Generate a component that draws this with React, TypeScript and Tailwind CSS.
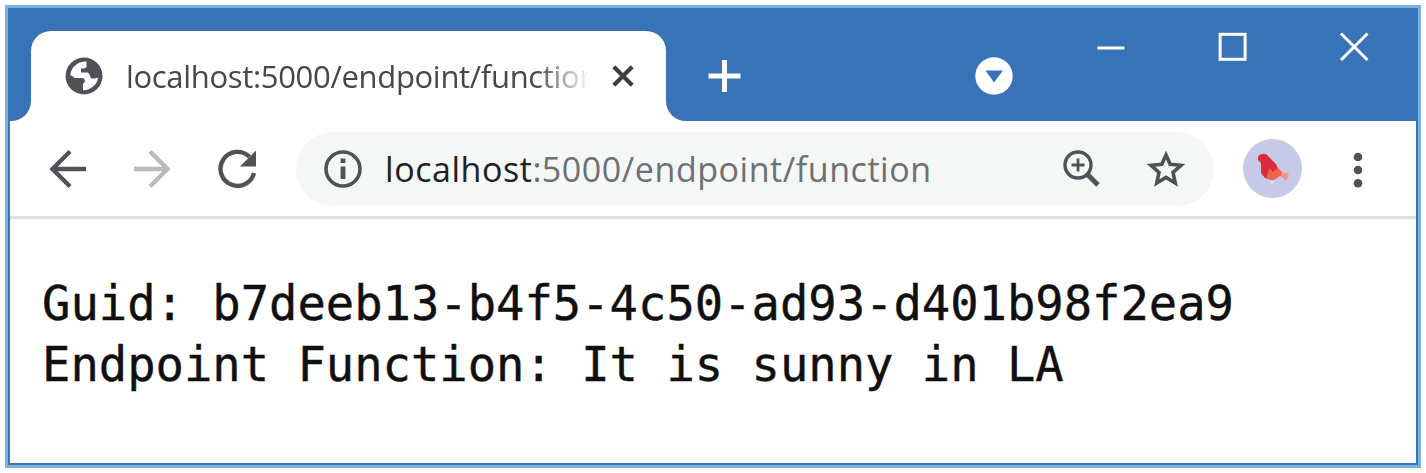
import type { ReactNode } from "react";

function Icon({ className, children }: { className: string; children: ReactNode }) {
  return (
    <svg className={`shrink-0 ${className}`} viewBox="0 0 44 44" width="44" height="44" fill="none">
      {children}
    </svg>
  );
}

function TabStrip() {
  return (
    <div className="h-[113px] shrink-0 flex flex-col bg-white">
      <div className="h-[23px] bg-[#3873b7]" />
      <div className="flex h-[90px]">
        <div className="w-[21px] rounded-br-[20px] bg-[#3873b7]" />
        <div className="w-[635px] bg-[#3873b7]">
          <div className="flex h-full items-center rounded-t-[20px] bg-white pl-[31px]">
            <Icon className="text-[#4f5358]">
              <circle cx="22" cy="22" r="18.5" fill="currentColor" />
              <path d="M24.5 7.5 C16 7 9 13 8.3 21 L13 24 L20 24 C22 24 23 25.5 23 27.5 L21 30 L21 36.2 C28 36.5 35.5 31 36 23.5 L33 24.5 L30 24.5 C28 24.5 28 19 25.5 18.5 L19 18.5 L19 14.5 C21 14.5 24.5 14.5 24.5 12.5 Z" fill="white" />
            </Icon>
            <div className="ml-[20px] w-[465px] overflow-hidden whitespace-nowrap font-['Open_Sans',sans-serif] text-[31px] leading-[44px] tracking-[-0.32px] text-[#45474c] [mask-image:linear-gradient(to_right,black_88%,transparent)]">
              localhost:5000/endpoint/function
            </div>
            <Icon className="ml-[10px] text-[#3c4043]">
              <path d="M12.8 12.8 L31.2 31.2 M31.2 12.8 L12.8 31.2" stroke="currentColor" strokeWidth="4.2" />
            </Icon>
          </div>
        </div>
        <div className="flex flex-1 rounded-bl-[20px] bg-[#3873b7] text-white">
          <Icon className="ml-[36px] mt-[23px]">
            <path d="M22.5 6 V38 M6.5 22 H38.5" stroke="currentColor" strokeWidth="5" />
          </Icon>
          <Icon className="ml-[226px] mt-[23px]">
            <circle cx="22" cy="22" r="18.7" fill="currentColor" />
            <path d="M13.5 16.5 H31 L22 28.5 Z" fill="#3873b7" />
          </Icon>
          <Icon className="ml-[73px] -mt-[6px]">
            <path d="M8.5 23 H35.5" stroke="currentColor" strokeWidth="3" />
          </Icon>
          <Icon className="ml-[78px] -mt-[6px]">
            <rect x="9.1" y="9.3" width="25" height="25" stroke="currentColor" strokeWidth="3" />
          </Icon>
          <Icon className="ml-[77px] -mt-[6px]">
            <path d="M9 8.5 L35.5 35 M35.5 8.5 L9 35" stroke="currentColor" strokeWidth="3" />
          </Icon>
        </div>
      </div>
    </div>
  );
}

function Toolbar() {
  return (
    <div className="flex h-[98px] shrink-0 border-b-[3px] border-[#dedfe0] bg-white pt-[10px] text-[#4f5358]">
      <div className="flex h-[75px] flex-1 items-center">
        <Icon className="ml-[35px]">
          <path d="M41 22 H7 M25 4.5 L7.5 22 L25 39.5" stroke="currentColor" strokeWidth="4.4" />
        </Icon>
        <Icon className="ml-[42px] text-[#b9babc]">
          <path d="M3 22 H37 M19 4.5 L36.5 22 L19 39.5" stroke="currentColor" strokeWidth="4.4" />
        </Icon>
        <Icon className="ml-[40px]">
          <path d="M39 26 A17 17 0 1 1 34.5 9.8" stroke="currentColor" strokeWidth="4.4" />
          <path d="M41 3.5 V19.5 H25 Z" fill="currentColor" />
        </Icon>
        <div className="ml-[37px] flex h-[74px] w-[918px] items-center rounded-full bg-[#f5f6f6] pl-[25px]">
          <Icon className="">
            <circle cx="22" cy="22" r="17" stroke="currentColor" strokeWidth="3.6" />
            <path d="M22 11.5 V16 M22 19.5 V32" stroke="currentColor" strokeWidth="4.8" />
          </Icon>
          <div className="ml-[20px] w-[560px] whitespace-nowrap font-['Open_Sans',sans-serif] text-[34px] leading-[44px] tracking-[0.55px] text-[#6d7074]">
            <span className="text-[#202124]">localhost</span>:5000/endpoint/function
          </div>
          <Icon className="ml-[115px]">
            <circle cx="18" cy="18" r="13" stroke="currentColor" strokeWidth="3.4" />
            <path d="M27 27 L38 38" stroke="currentColor" strokeWidth="5" />
            <path d="M18 11.5 V24.5 M11.5 18 H24.5" stroke="currentColor" strokeWidth="2.8" />
          </Icon>
          <Icon className="ml-[40px]">
            <path d="M22 8 L26.2 17.3 L37 18.3 L29 25.4 L31.3 36 L22 30.4 L12.7 36 L15 25.4 L7 18.3 L17.8 17.3 Z" stroke="currentColor" strokeWidth="3.6" />
          </Icon>
        </div>
        <div className="ml-[29px] flex size-[59px] items-center justify-center rounded-full bg-[#c7cae6]">
          <svg width="36" height="32" viewBox="0 0 36 32">
            <path d="M3 4 C5 0 11 0 13 3 L21 11 L24 18 L22 25 L17 27 L10 25 L6 20 L6 10 L3 7 Z" fill="#dc2b3d" />
            <path d="M13 19 L15 15 L18 19 L23 15 L28 20 L33 21 L32 26 L25 23 L19 27 L11 25 Z" fill="#ee6548" />
            <path d="M26 20 L34 20 L31 28 L26 23 Z" fill="#f19a78" />
            <path d="M14 28 H20 L17 31 Z" fill="#e5dfef" />
          </svg>
        </div>
        <Icon className="ml-[34px]">
          <g fill="currentColor">
            <circle cx="22" cy="10" r="4.3" />
            <circle cx="22" cy="23" r="4.3" />
            <circle cx="22" cy="36.2" r="4.3" />
          </g>
        </Icon>
      </div>
    </div>
  );
}

export default function App() {
  return (
    <div className="h-[473px] w-full bg-white pl-[5px] pr-[5px] pt-[5px]">
      <div className="flex h-[463px] w-[1416px] flex-col border-[3px] border-[#7cb2dc]">
        <div className="flex flex-1 flex-col border-x-2 border-b-2 border-[#3078bb] bg-white">
          <TabStrip />
          <Toolbar />
          <pre className="pl-[32px] pt-[54px] font-['DejaVu_Sans_Mono',monospace] text-[47.15px] leading-[61px] text-[#101010] [-webkit-text-stroke:0.4px_#101010]">
            {"Guid: b7deeb13-b4f5-4c50-ad93-d401b98f2ea9\nEndpoint Function: It is sunny in LA"}
          </pre>
        </div>
      </div>
    </div>
  );
}
